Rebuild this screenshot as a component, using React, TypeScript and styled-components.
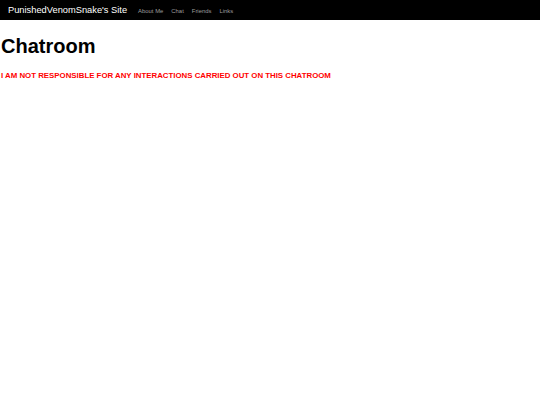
import React from "react";
import styled, { createGlobalStyle } from "styled-components";

const Global = createGlobalStyle`
  html, body { margin: 0; padding: 0; background: #fff; }
  body { font-family: "Liberation Sans", Arial, sans-serif; }
`;

const NavBar = styled.nav`
  height: 20px;
  background: #000;
  display: flex;
  align-items: center;
  padding: 0 8px;
`;

const Brand = styled.a`
  color: #fff;
  font-size: 9.3px;
  text-decoration: none;
  margin-right: 11px;
  line-height: 20px;
`;

const NavLinks = styled.ul`
  display: flex;
  list-style: none;
  margin: 0;
  padding: 0;
  gap: 8px;
`;

const NavLink = styled.a`
  color: #9d9d9d;
  font-size: 5.9px;
  text-decoration: none;
  line-height: 20px;
`;

const Main = styled.main`
  padding: 0 1px;
`;

const Title = styled.h1`
  font-size: 20px;
  font-weight: bold;
  margin: 14px 0 0;
  line-height: 24px;
  color: #000;
`;

const Warning = styled.p`
  color: #ff0000;
  font-size: 7.85px;
  font-weight: bold;
  margin: 13px 0 0;
`;

export default function App() {
  return (
    <>
      <Global />
      <NavBar>
        <Brand href="#">PunishedVenomSnake's Site</Brand>
        <NavLinks>
          <li><NavLink href="#">About Me</NavLink></li>
          <li><NavLink href="#">Chat</NavLink></li>
          <li><NavLink href="#">Friends</NavLink></li>
          <li><NavLink href="#">Links</NavLink></li>
        </NavLinks>
      </NavBar>
      <Main>
        <Title>Chatroom</Title>
        <Warning>I AM NOT RESPONSIBLE FOR ANY INTERACTIONS CARRIED OUT ON THIS CHATROOM</Warning>
      </Main>
    </>
  );
}
